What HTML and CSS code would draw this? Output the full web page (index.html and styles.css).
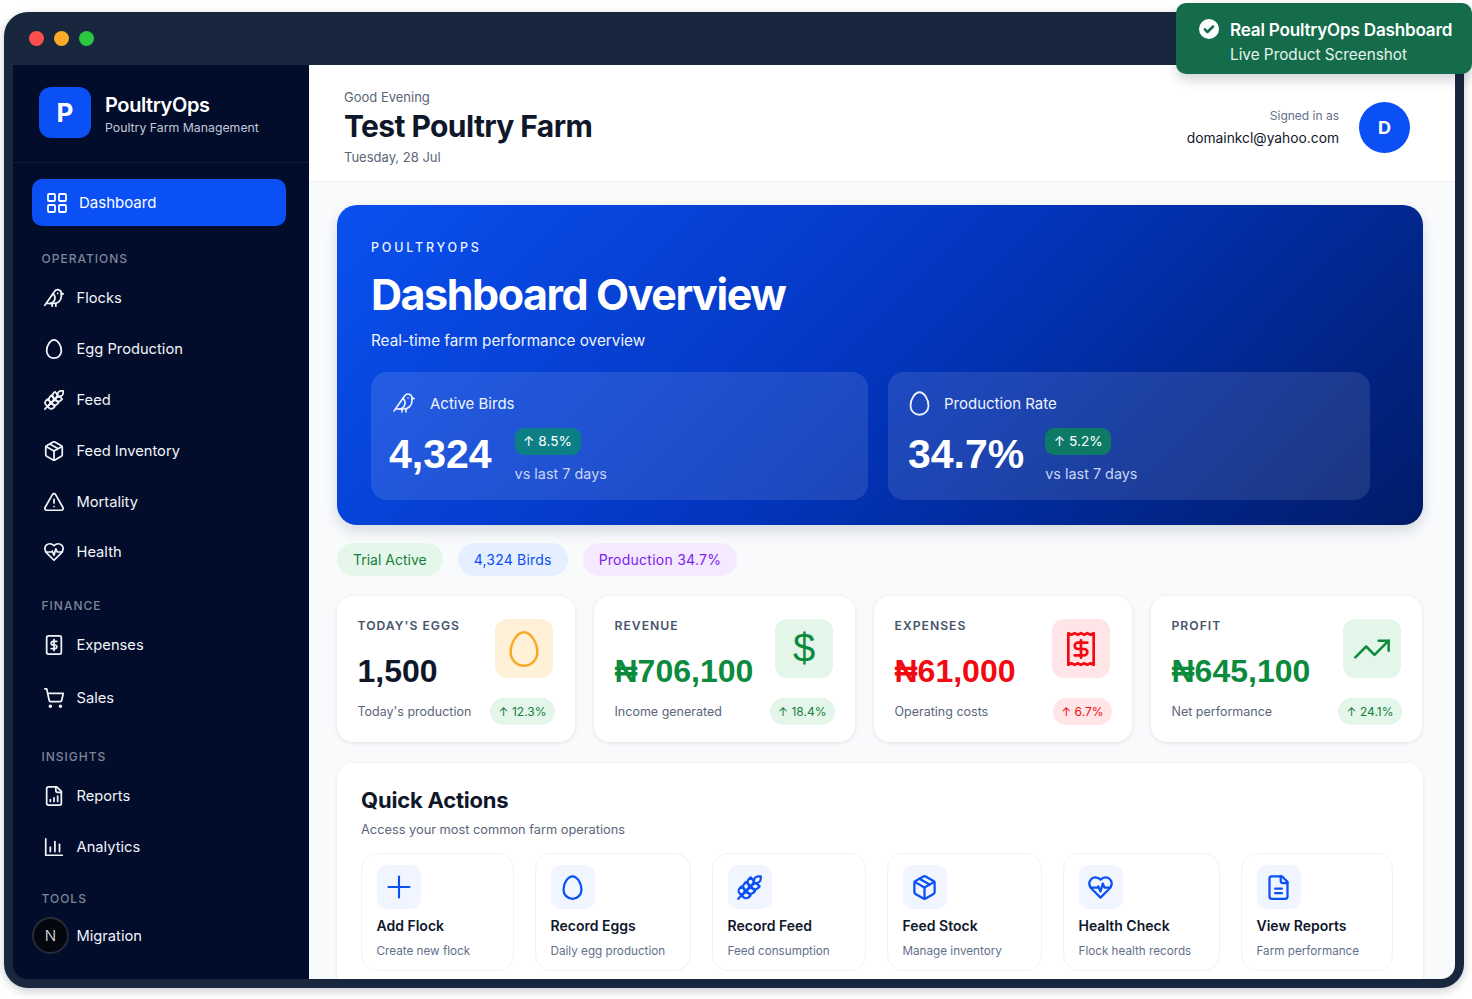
FILE: index.html
```html
<!DOCTYPE html>
<html lang="en">
  <head>
    <meta charset="UTF-8" />
    <meta name="viewport" content="width=device-width, initial-scale=1.0" />
    <title>PoultryOps Dashboard</title>
    <link rel="stylesheet" href="styles.css">
  </head>
  <body>
    <!-- Icon set -->
    <svg class="icon-defs" width="0" height="0" aria-hidden="true">
      <symbol id="i-grid" viewBox="0 0 24 24"><rect x="3" y="3" width="7" height="7" rx="1"/><rect x="14" y="3" width="7" height="7" rx="1"/><rect x="14" y="14" width="7" height="7" rx="1"/><rect x="3" y="14" width="7" height="7" rx="1"/></symbol>
      <symbol id="i-bird" viewBox="0 0 24 24"><path d="M16 7h.01"/><path d="M3.4 18H12a8 8 0 0 0 8-8V7a4 4 0 0 0-7.28-2.3L2 20"/><path d="m20 7 2 .5-2 .5"/><path d="M10 18v3"/><path d="M14 17.75V21"/><path d="M7 18a6 6 0 0 0 3.84-10.61"/></symbol>
      <symbol id="i-egg" viewBox="0 0 24 24"><path d="M12 2C8 2 4 8 4 14a8 8 0 0 0 16 0c0-6-4-12-8-12"/></symbol>
      <symbol id="i-wheat" viewBox="0 0 24 24"><path d="M2 22 16 8"/><path d="M3.47 12.53 5 11l1.53 1.53a3.5 3.5 0 0 1 0 4.94L5 19l-1.53-1.53a3.5 3.5 0 0 1 0-4.94Z"/><path d="M7.47 8.53 9 7l1.53 1.53a3.5 3.5 0 0 1 0 4.94L9 15l-1.53-1.53a3.5 3.5 0 0 1 0-4.94Z"/><path d="M11.47 4.53 13 3l1.53 1.53a3.5 3.5 0 0 1 0 4.94L13 11l-1.53-1.53a3.5 3.5 0 0 1 0-4.94Z"/><path d="M20 2h2v2a4 4 0 0 1-4 4h-2V6a4 4 0 0 1 4-4Z"/><path d="M11.47 17.47 13 19l-1.53 1.53a3.5 3.5 0 0 1-4.94 0L5 19l1.53-1.53a3.5 3.5 0 0 1 4.94 0Z"/><path d="M15.47 13.47 17 15l-1.53 1.53a3.5 3.5 0 0 1-4.94 0L9 15l1.53-1.53a3.5 3.5 0 0 1 4.94 0Z"/><path d="M19.47 9.47 21 11l-1.53 1.53a3.5 3.5 0 0 1-4.94 0L13 11l1.53-1.53a3.5 3.5 0 0 1 4.94 0Z"/></symbol>
      <symbol id="i-package" viewBox="0 0 24 24"><path d="M11 21.73a2 2 0 0 0 2 0l7-4A2 2 0 0 0 21 16V8a2 2 0 0 0-1-1.73l-7-4a2 2 0 0 0-2 0l-7 4A2 2 0 0 0 3 8v8a2 2 0 0 0 1 1.73z"/><path d="M12 22V12"/><path d="M3.29 7 12 12l8.71-5"/><path d="m7.5 4.27 9 5.15"/></symbol>
      <symbol id="i-alert" viewBox="0 0 24 24"><path d="m21.73 18-8-14a2 2 0 0 0-3.48 0l-8 14A2 2 0 0 0 4 21h16a2 2 0 0 0 1.73-3"/><path d="M12 9v4"/><path d="M12 17h.01"/></symbol>
      <symbol id="i-heart" viewBox="0 0 24 24"><path d="M19 14c1.49-1.46 3-3.21 3-5.5A5.5 5.5 0 0 0 16.5 3c-1.76 0-3 .5-4.5 2-1.5-1.5-2.74-2-4.5-2A5.5 5.5 0 0 0 2 8.5c0 2.3 1.5 4.05 3 5.5l7 7Z"/><path d="M3.22 12H9.5l.5-1 2 4.5 2-7 1.5 3.5h5.27"/></symbol>
      <symbol id="i-bill" viewBox="0 0 24 24"><rect x="4" y="2" width="16" height="20" rx="2"/><path d="M12 6v12"/><path d="M15 8h-4a2 2 0 0 0 0 4h2a2 2 0 0 1 0 4H9"/></symbol>
      <symbol id="i-cart" viewBox="0 0 24 24"><circle cx="8" cy="21" r="1"/><circle cx="19" cy="21" r="1"/><path d="M2.05 2.05h2l2.66 12.42a2 2 0 0 0 2 1.58h9.78a2 2 0 0 0 1.95-1.57l1.65-7.43H5.12"/></symbol>
      <symbol id="i-file-chart" viewBox="0 0 24 24"><path d="M15 2H6a2 2 0 0 0-2 2v16a2 2 0 0 0 2 2h12a2 2 0 0 0 2-2V7Z"/><path d="M14 2v4a2 2 0 0 0 2 2h4"/><path d="M8 18v-2"/><path d="M12 18v-4"/><path d="M16 18v-6"/></symbol>
      <symbol id="i-bars" viewBox="0 0 24 24"><path d="M3 3v18h18"/><path d="M8 17v-5"/><path d="M13 17V6"/><path d="M18 17V9"/></symbol>
      <symbol id="i-receipt" viewBox="0 0 24 24"><path d="M4 2v20l2-1 2 1 2-1 2 1 2-1 2 1 2-1 2 1V2l-2 1-2-1-2 1-2-1-2 1-2-1-2 1Z"/><path d="M16 8h-6a2 2 0 1 0 0 4h4a2 2 0 1 1 0 4H8"/><path d="M12 17.5v-11"/></symbol>
      <symbol id="i-trend" viewBox="0 0 24 24"><path d="M22 7l-8.5 8.5-5-5L2 17"/><path d="M16 7h6v6"/></symbol>
      <symbol id="i-plus" viewBox="0 0 24 24"><path d="M5 12h14"/><path d="M12 5v14"/></symbol>
      <symbol id="i-file" viewBox="0 0 24 24"><path d="M15 2H6a2 2 0 0 0-2 2v16a2 2 0 0 0 2 2h12a2 2 0 0 0 2-2V7Z"/><path d="M14 2v4a2 2 0 0 0 2 2h4"/><path d="M9 13h6"/><path d="M9 17h6"/></symbol>
    </svg>

    <div class="window">
      <!-- Title bar -->
      <div class="titlebar">
        <span class="dot dot-red"></span>
        <span class="dot dot-amber"></span>
        <span class="dot dot-green"></span>
      </div>

      <div class="app">
        <!-- Sidebar -->
        <aside class="sidebar">
          <div class="brand">
            <div class="brand-logo">P</div>
            <div class="brand-text">
              <div class="brand-name">PoultryOps</div>
              <div class="brand-sub">Poultry Farm Management</div>
            </div>
          </div>

          <nav class="nav">
            <a class="nav-active"><svg class="nav-active-icon"><use href="#i-grid"/></svg>Dashboard</a>

            <div class="nav-label label-operations">OPERATIONS</div>
            <a class="nav-item"><svg class="nav-icon"><use href="#i-bird"/></svg>Flocks</a>
            <a class="nav-item"><svg class="nav-icon"><use href="#i-egg"/></svg>Egg Production</a>
            <a class="nav-item"><svg class="nav-icon"><use href="#i-wheat"/></svg>Feed</a>
            <a class="nav-item"><svg class="nav-icon"><use href="#i-package"/></svg>Feed Inventory</a>
            <a class="nav-item"><svg class="nav-icon"><use href="#i-alert"/></svg>Mortality</a>
            <a class="nav-item"><svg class="nav-icon"><use href="#i-heart"/></svg>Health</a>

            <div class="nav-label label-finance">FINANCE</div>
            <a class="nav-item"><svg class="nav-icon"><use href="#i-bill"/></svg>Expenses</a>
            <a class="nav-item item-sales"><svg class="nav-icon"><use href="#i-cart"/></svg>Sales</a>

            <div class="nav-label label-insights">INSIGHTS</div>
            <a class="nav-item"><svg class="nav-icon"><use href="#i-file-chart"/></svg>Reports</a>
            <a class="nav-item"><svg class="nav-icon"><use href="#i-bars"/></svg>Analytics</a>

            <div class="nav-label label-tools">TOOLS</div>
            <a class="nav-item"><span class="nav-icon"></span>Migration</a>
          </nav>

          <div class="dev-badge">N</div>
        </aside>

        <!-- Main column -->
        <main class="main">
          <header class="topbar">
            <div>
              <div class="greeting">Good Evening</div>
              <h1 class="farm-name">Test Poultry Farm</h1>
              <div class="today">Tuesday, 28 Jul</div>
            </div>
            <div class="user">
              <div class="user-text">
                <div class="user-label">Signed in as</div>
                <div class="user-email">domainkcl@yahoo.com</div>
              </div>
              <div class="avatar">D</div>
            </div>
          </header>

          <div class="content">
            <!-- Hero -->
            <section class="hero">
              <div class="hero-kicker">POULTRYOPS</div>
              <h2 class="hero-title">Dashboard Overview</h2>
              <p class="hero-sub">Real-time farm performance overview</p>
              <div class="hero-stats">
                <div class="hero-stat stat-birds">
                  <div class="hero-stat-head"><svg class="hero-icon"><use href="#i-bird"/></svg>Active Birds</div>
                  <div class="hero-stat-body">
                    <div class="hero-value">4,324</div>
                    <div>
                      <span class="hero-badge badge-teal">↑ 8.5%</span>
                      <div class="hero-note">vs last 7 days</div>
                    </div>
                  </div>
                </div>
                <div class="hero-stat stat-rate">
                  <div class="hero-stat-head"><svg class="hero-icon"><use href="#i-egg"/></svg>Production Rate</div>
                  <div class="hero-stat-body">
                    <div class="hero-value">34.7%</div>
                    <div>
                      <span class="hero-badge badge-green">↑ 5.2%</span>
                      <div class="hero-note">vs last 7 days</div>
                    </div>
                  </div>
                </div>
              </div>
            </section>

            <!-- Status pills -->
            <div class="pills">
              <span class="pill pill-green">Trial Active</span>
              <span class="pill pill-blue">4,324 Birds</span>
              <span class="pill pill-purple">Production 34.7%</span>
            </div>

            <!-- Stat cards -->
            <section class="cards">
              <div class="card">
                <div class="card-top">
                  <div>
                    <div class="card-label">TODAY'S EGGS</div>
                    <div class="card-value">1,500</div>
                  </div>
                  <div class="tile tile-orange"><svg><use href="#i-egg"/></svg></div>
                </div>
                <div class="card-foot">
                  <span>Today's production</span>
                  <span class="trend trend-up">↑ 12.3%</span>
                </div>
              </div>
              <div class="card">
                <div class="card-top">
                  <div>
                    <div class="card-label">REVENUE</div>
                    <div class="card-value value-green">₦706,100</div>
                  </div>
                  <div class="tile tile-green tile-glyph">$</div>
                </div>
                <div class="card-foot">
                  <span>Income generated</span>
                  <span class="trend trend-up">↑ 18.4%</span>
                </div>
              </div>
              <div class="card">
                <div class="card-top">
                  <div>
                    <div class="card-label">EXPENSES</div>
                    <div class="card-value value-red">₦61,000</div>
                  </div>
                  <div class="tile tile-red tile-receipt"><svg><use href="#i-receipt"/></svg></div>
                </div>
                <div class="card-foot">
                  <span>Operating costs</span>
                  <span class="trend trend-down">↑ 6.7%</span>
                </div>
              </div>
              <div class="card">
                <div class="card-top">
                  <div>
                    <div class="card-label">PROFIT</div>
                    <div class="card-value value-green">₦645,100</div>
                  </div>
                  <div class="tile tile-green tile-last"><svg><use href="#i-trend"/></svg></div>
                </div>
                <div class="card-foot">
                  <span>Net performance</span>
                  <span class="trend trend-up">↑ 24.1%</span>
                </div>
              </div>
            </section>

            <!-- Quick actions -->
            <section class="quick">
              <h3 class="quick-title">Quick Actions</h3>
              <p class="quick-sub">Access your most common farm operations</p>
              <div class="actions">
                <div class="action">
                  <div class="action-icon icon-plus"><svg><use href="#i-plus"/></svg></div>
                  <div class="action-name">Add Flock</div>
                  <div class="action-desc">Create new flock</div>
                </div>
                <div class="action">
                  <div class="action-icon"><svg><use href="#i-egg"/></svg></div>
                  <div class="action-name">Record Eggs</div>
                  <div class="action-desc">Daily egg production</div>
                </div>
                <div class="action">
                  <div class="action-icon"><svg><use href="#i-wheat"/></svg></div>
                  <div class="action-name">Record Feed</div>
                  <div class="action-desc">Feed consumption</div>
                </div>
                <div class="action">
                  <div class="action-icon"><svg><use href="#i-package"/></svg></div>
                  <div class="action-name">Feed Stock</div>
                  <div class="action-desc">Manage inventory</div>
                </div>
                <div class="action">
                  <div class="action-icon"><svg><use href="#i-heart"/></svg></div>
                  <div class="action-name">Health Check</div>
                  <div class="action-desc">Flock health records</div>
                </div>
                <div class="action">
                  <div class="action-icon"><svg><use href="#i-file"/></svg></div>
                  <div class="action-name">View Reports</div>
                  <div class="action-desc">Farm performance</div>
                </div>
              </div>
            </section>
          </div>
        </main>
      </div>
    </div>

    <!-- Floating toast -->
    <div class="toast">
      <svg class="toast-icon" viewBox="0 0 24 24"><circle cx="12" cy="12" r="12"/><path d="m7 12.4 3.2 3.2 6.6-6.6"/></svg>
      <div>
        <div class="toast-title">Real PoultryOps Dashboard</div>
        <div class="toast-sub">Live Product Screenshot</div>
      </div>
    </div>
  </body>
</html>
```

FILE: styles.css
```css
/* Page and window frame */
body {
  margin: 0;
  height: 999px;
  overflow: hidden;
  background: #ffffff;
  font-family: Inter, "Noto Sans", sans-serif;
  color: #0f172a;
  padding: 12px 8px 11px 4px;
  box-sizing: border-box;
}

h1, h2, h3, p {
  margin: 0;
}

.icon-defs {
  position: absolute;
}

svg {
  fill: none;
  stroke: currentColor;
  stroke-width: 2;
  stroke-linecap: round;
  stroke-linejoin: round;
}

.window {
  height: 100%;
  box-sizing: border-box;
  display: flex;
  flex-direction: column;
  background: #18273d;
  border-radius: 24px;
  padding: 0 9px 9px 9px;
  box-shadow: 0 3px 10px rgba(15, 23, 42, 0.22);
}

.titlebar {
  height: 53px;
  flex-shrink: 0;
  display: flex;
  align-items: center;
  gap: 10px;
  padding-left: 16px;
}

.dot {
  width: 15px;
  height: 15px;
  border-radius: 50%;
}

.dot-red { background: #fe4f4f; }
.dot-amber { background: #fdab26; }
.dot-green { background: #2bc840; }

.app {
  flex: 1;
  min-height: 0;
  display: flex;
  border-radius: 0 0 14px 14px;
  overflow: hidden;
}

/* Sidebar */
.sidebar {
  position: relative;
  width: 296px;
  flex-shrink: 0;
  background: #020c2b;
  color: #ffffff;
}

.brand {
  height: 98px;
  box-sizing: border-box;
  display: flex;
  align-items: flex-start;
  gap: 14px;
  padding: 22px 0 0 26px;
  border-bottom: 1px solid #121c3a;
}

.brand-logo {
  width: 52px;
  height: 51px;
  border-radius: 12px;
  background: #0a50f5;
  display: flex;
  align-items: center;
  justify-content: center;
  font-size: 26px;
  font-weight: 700;
}

.brand-text {
  padding-top: 5px;
}

.brand-name {
  font-size: 20px;
  font-weight: 600;
  line-height: 26px;
  letter-spacing: -0.4px;
}

.brand-sub {
  font-size: 12.3px;
  line-height: 20px;
  color: #c3c9d6;
}

.nav {
  padding: 16px 23px 0 19px;
}

.nav-active {
  height: 47px;
  display: flex;
  align-items: center;
  gap: 10px;
  padding-left: 13px;
  background: #0a50f5;
  border-radius: 10px;
  font-size: 15px;
}

.nav-active-icon {
  width: 24px;
  height: 24px;
  stroke-width: 1.8;
}

.nav-label {
  height: 16px;
  line-height: 16px;
  padding-left: 9.5px;
  font-size: 12px;
  font-weight: 500;
  letter-spacing: 1px;
  color: #7d8699;
}

.label-operations { margin: 25px 0 6px; }
.label-finance { margin: 20px 0 6px; }
.label-insights { margin: 25.5px 0 6px; }
.label-tools { margin: 19px 0 3px; }

.nav-item {
  height: 50.8px;
  display: flex;
  align-items: center;
  gap: 11.5px;
  padding-left: 11px;
  font-size: 14.7px;
  color: #f1f4f9;
}

.item-sales {
  margin-top: 2px;
}

.nav-icon {
  width: 22px;
  height: 22px;
  stroke-width: 1.9;
}

/* Small round badge sitting over the last nav row */
.dev-badge {
  position: absolute;
  left: 19px;
  top: 852px;
  width: 33px;
  height: 33px;
  border: 2px solid #262b38;
  border-radius: 50%;
  background: #05070f;
  display: flex;
  align-items: center;
  justify-content: center;
  font-size: 15px;
  font-weight: 300;
  color: #e8e8ec;
}

/* Main column */
.main {
  flex: 1;
  min-width: 0;
  background: #f8fafc;
  overflow: hidden;
}

.topbar {
  height: 117px;
  box-sizing: border-box;
  display: flex;
  align-items: center;
  justify-content: space-between;
  padding: 8px 45px 0 35px;
  background: #ffffff;
  border-bottom: 1px solid #eef1f5;
}

.greeting {
  font-size: 13px;
  line-height: 20px;
  color: #5b6679;
}

.farm-name {
  font-size: 30px;
  font-weight: 700;
  line-height: 38px;
  letter-spacing: -0.6px;
  color: #0f172a;
}

.today {
  margin-top: 2px;
  font-size: 13px;
  line-height: 20px;
  color: #5b6679;
}

.user {
  display: flex;
  align-items: center;
  gap: 20px;
}

.user-text {
  text-align: right;
}

.user-label {
  font-size: 12px;
  line-height: 22px;
  color: #64708a;
}

.user-email {
  font-size: 13.8px;
  line-height: 22px;
  color: #0f172a;
}

.avatar {
  width: 51px;
  height: 51px;
  border-radius: 50%;
  background: #0a50f5;
  color: #ffffff;
  display: flex;
  align-items: center;
  justify-content: center;
  font-size: 18px;
  font-weight: 700;
}

.content {
  padding: 23px 32px 0 28px;
}

/* Hero banner */
.hero {
  height: 320px;
  box-sizing: border-box;
  padding: 34px 34px 0;
  border-radius: 20px;
  background: linear-gradient(135deg, #0a50f0 0%, #0335bd 50%, #001b68 100%);
  box-shadow: 0 6px 14px rgba(15, 23, 42, 0.14);
  color: #ffffff;
}

.hero-kicker {
  font-size: 12.5px;
  line-height: 17px;
  font-weight: 500;
  letter-spacing: 2.8px;
  color: #eef3ff;
}

.hero-title {
  margin-top: 8px;
  font-size: 43px;
  line-height: 60px;
  font-weight: 700;
  letter-spacing: -1.45px;
}

.hero-sub {
  margin-top: 5px;
  font-size: 15.3px;
  line-height: 24px;
  color: #eef3ff;
}

.hero-stats {
  display: flex;
  gap: 20px;
  margin-top: 19px;
}

.hero-stat {
  height: 128px;
  box-sizing: border-box;
  padding: 18px;
  border-radius: 16px;
  background: rgba(255, 255, 255, 0.11);
}

.stat-birds { width: 497px; }
.stat-rate { width: 482px; }

.hero-stat-head {
  display: flex;
  align-items: center;
  gap: 14px;
  height: 26px;
  padding-left: 3px;
  font-size: 15px;
  color: #eef3ff;
}

.hero-icon {
  width: 24px;
  height: 24px;
  stroke-width: 1.6;
}

.stat-rate .hero-stat-head {
  gap: 11px;
  padding-left: 0;
}

.stat-rate .hero-icon {
  width: 27px;
  height: 27px;
}

.hero-stat-body {
  display: flex;
  gap: 23px;
  margin-top: 12px;
}

.stat-rate .hero-stat-body {
  gap: 21px;
  padding-left: 2px;
}

.hero-value {
  font-family: "Liberation Sans", Arial, sans-serif;
  font-size: 41px;
  font-weight: 700;
  line-height: 52px;
}

.hero-badge {
  display: inline-block;
  height: 27px;
  line-height: 27px;
  padding: 0 8.5px;
  border-radius: 9px;
  font-size: 13.7px;
}

.badge-teal { background: #0b7f84; }
.badge-green { background: #0d7a66; }

.hero-note {
  margin-top: 7px;
  font-size: 14.4px;
  line-height: 24px;
  color: #c8d5f5;
}

/* Status pills */
.pills {
  display: flex;
  gap: 15px;
  margin-top: 18px;
}

.pill {
  height: 33px;
  line-height: 33px;
  padding: 0 16px;
  border-radius: 17px;
  font-size: 14px;
}

.pill-green { background: #e5f7ea; color: #15803d; }
.pill-blue { background: #e5efff; color: #0a50f5; letter-spacing: 0.2px; }
.pill-purple { background: #f5e9ff; color: #7c22f0; letter-spacing: 0.25px; }

/* Stat cards */
.cards {
  display: grid;
  grid-template-columns: 238px 261px 258px 271px;
  gap: 19px;
  margin-top: 20px;
}

.card {
  height: 146px;
  box-sizing: border-box;
  padding: 22px 20px 0 20.5px;
  background: #ffffff;
  border-radius: 16px;
  box-shadow: 0 1px 4px rgba(15, 23, 42, 0.1);
}

.card-top {
  display: flex;
  justify-content: space-between;
  height: 80px;
}

.card-label {
  font-size: 12.2px;
  font-weight: 600;
  line-height: 16px;
  letter-spacing: 1px;
  color: #475569;
}

.card-value {
  margin-top: 15px;
  font-family: "Liberation Sans", Arial, sans-serif;
  font-size: 32px;
  font-weight: 700;
  line-height: 44px;
  white-space: nowrap;
}

.value-green { color: #0c8a3e; }
.value-red { color: #f20a12; }

.tile {
  width: 58px;
  height: 59px;
  margin: 1px 2px 0 0;
  border-radius: 12px;
  display: flex;
  align-items: center;
  justify-content: center;
  flex-shrink: 0;
}

.tile svg {
  width: 40px;
  height: 40px;
  stroke-width: 1.5;
}

.tile-glyph {
  font-family: "Liberation Sans", Arial, sans-serif;
  font-size: 40px;
  line-height: 59px;
}

.tile-receipt svg {
  width: 38px;
  height: 38px;
  stroke-width: 1.7;
}

.tile-last {
  margin-right: 1px;
}

.tile-orange { background: #fff1d8; color: #f9a825; }
.tile-green { background: #e3f6e9; color: #0c8a3e; }
.tile-red { background: #ffe5e7; color: #f20a12; }

.card-foot {
  display: flex;
  align-items: center;
  justify-content: space-between;
  font-size: 12.5px;
  color: #5b6679;
}

.trend {
  height: 27px;
  line-height: 27px;
  padding: 0 8.5px;
  border-radius: 14px;
  font-size: 12px;
}

.trend-up { background: #e3f6e9; color: #15803d; }
.trend-down { background: #ffe5e7; color: #f20a12; }

/* Quick actions */
.quick {
  margin-top: 21px;
  padding: 23px 29px 0 24px;
  height: 240px;
  box-sizing: border-box;
  background: #ffffff;
  border-radius: 16px 16px 0 0;
  box-shadow: 0 1px 4px rgba(15, 23, 42, 0.08);
}

.quick-title {
  font-size: 22px;
  font-weight: 700;
  line-height: 28px;
  letter-spacing: -0.2px;
}

.quick-sub {
  margin-top: 6px;
  font-size: 12.8px;
  line-height: 20px;
  color: #5b6679;
}

.actions {
  display: grid;
  grid-template-columns: 152.5px 155.5px 153.5px 154.5px 156.5px 152px;
  gap: 21.5px;
  margin-top: 13px;
}

.action {
  height: 118px;
  box-sizing: border-box;
  padding: 11px 14.5px 0;
  border: 1px solid #eff2f6;
  border-radius: 16px;
}

.action-icon {
  width: 44px;
  height: 44px;
  border-radius: 10px;
  background: #f0f5ff;
  color: #0a50f5;
  display: flex;
  align-items: center;
  justify-content: center;
}

.action-icon svg {
  width: 27px;
  height: 27px;
}

.icon-plus svg {
  width: 36px;
  height: 36px;
  stroke-width: 1.4;
}

.action-name {
  margin-top: 7px;
  font-size: 14px;
  font-weight: 600;
  line-height: 20px;
}

.action-desc {
  margin-top: 6px;
  font-size: 11.7px;
  line-height: 18px;
  color: #64708a;
  white-space: nowrap;
}

/* Toast over the window corner */
.toast {
  position: absolute;
  top: 3px;
  left: 1176px;
  width: 296px;
  height: 71px;
  box-sizing: border-box;
  display: flex;
  align-items: center;
  gap: 11px;
  padding: 6px 0 0 23px;
  background: #146c4a;
  border-radius: 10px;
  box-shadow: 0 6px 12px rgba(15, 23, 42, 0.18);
  color: #ffffff;
}

.toast-icon {
  width: 20px;
  height: 20px;
  margin-top: -25px;
  stroke: #146c4a;
  stroke-width: 3;
}

.toast-icon circle {
  fill: #ffffff;
  stroke: none;
}

.toast-title {
  font-size: 17.1px;
  font-weight: 600;
  line-height: 25px;
  letter-spacing: -0.2px;
  white-space: nowrap;
}

.toast-sub {
  font-size: 15.3px;
  line-height: 25px;
  color: #e6f3ed;
}
```
